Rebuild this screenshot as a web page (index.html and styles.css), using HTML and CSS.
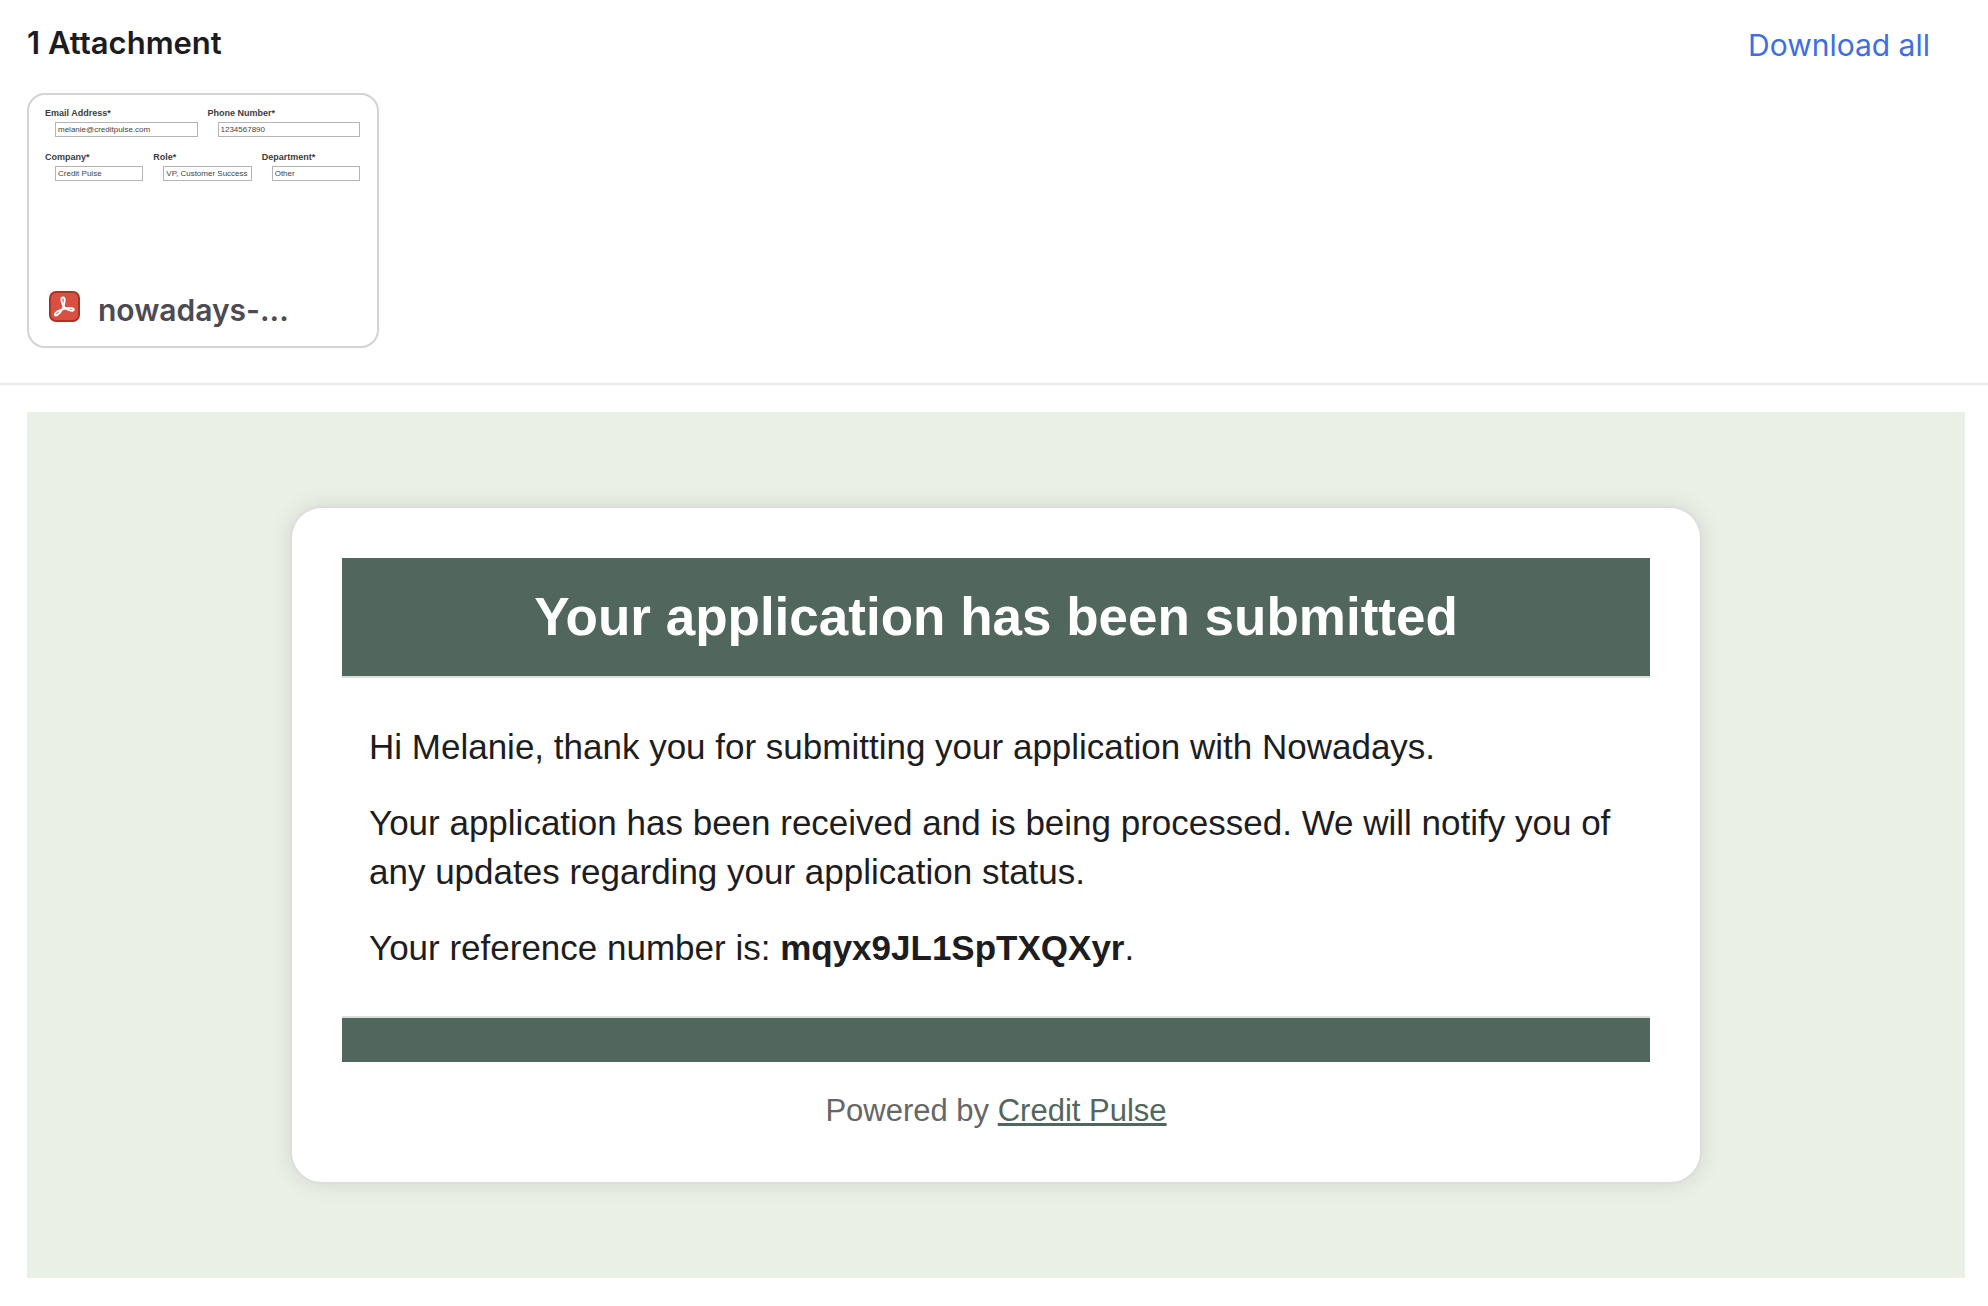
FILE: index.html
```html
<!DOCTYPE html>
<html lang="en">
<head>
<meta charset="utf-8">
<title>Your application has been submitted</title>
<link rel="stylesheet" href="styles.css">
</head>
<body>
<section class="attachments">
  <header class="attachments-header">
    <h2 class="attachments-title">1 Attachment</h2>
    <a class="download-all" href="#download">Download all</a>
  </header>
  <article class="file-card">
    <div class="preview">
      <div class="preview-row">
        <div class="field"><label for="email">Email Address*</label><input id="email" type="text" value="melanie@creditpulse.com" readonly></div>
        <div class="field"><label for="phone">Phone Number*</label><input id="phone" type="text" value="1234567890" readonly></div>
      </div>
      <div class="preview-row">
        <div class="field"><label for="company">Company*</label><input id="company" type="text" value="Credit Pulse" readonly></div>
        <div class="field"><label for="role">Role*</label><input id="role" type="text" value="VP, Customer Success" readonly></div>
        <div class="field"><label for="department">Department*</label><input id="department" type="text" value="Other" readonly></div>
      </div>
    </div>
    <button class="file-name" type="button">
      <svg class="pdf-icon" viewBox="0 0 31 31" aria-hidden="true">
        <rect x="1" y="1" width="29" height="29" rx="6" fill="#d95043" stroke="#ad3226" stroke-width="2"/>
        <path d="M14.5 15.5C12 10 11.500 6.500 14 6.500S15.800 10.500 14.500 15.500C13 20 9 24.500 6.800 24.500S6 20.500 12 18.800C18 16.500 24.500 16.500 24.800 18.500S19.500 20.500 14.500 15.500" fill="none" stroke="#fff" stroke-width="1.900" stroke-linejoin="round"/>
      </svg>
      <span>nowadays-...</span>
    </button>
  </article>
</section>
<main class="message">
  <div class="mail-card">
    <h1 class="mail-title">Your application has been submitted</h1>
    <div class="mail-body">
      <p>Hi Melanie, thank you for submitting your application with Nowadays.</p>
      <p>Your application has been received and is being processed. We will notify you of any updates regarding your application status.</p>
      <p>Your reference number is: <strong>mqyx9JL1SpTXQXyr</strong>.</p>
    </div>
    <div class="mail-bar"></div>
    <p class="mail-footer">Powered by <a href="#credit-pulse">Credit Pulse</a></p>
  </div>
</main>
</body>
</html>
```
FILE: styles.css
```css
* {
  box-sizing: border-box;
}

body {
  margin: 0;
  background: #fff;
  font-family: "Liberation Sans", Arial, sans-serif;
}

.attachments {
  padding: 23px 27px 35px;
  border-bottom: 2px solid #e9e9e9;
}

.attachments-header {
  display: flex;
  justify-content: space-between;
  align-items: flex-start;
  padding-right: 31px;
  margin-bottom: 26px;
  font-family: Inter, sans-serif;
}

.attachments-title {
  margin: 0;
  font-size: 31px;
  line-height: 40px;
  font-weight: 600;
  color: #1c1b20;
}

.download-all {
  font-size: 30px;
  line-height: 44px;
  color: #3d6ee2;
  text-decoration: none;
}

.file-card {
  display: flex;
  flex-direction: column;
  justify-content: space-between;
  width: 352px;
  min-height: 255px;
  padding: 12px 17px 16px 16px;
  border: 2px solid #d3d3d3;
  border-radius: 18px;
}

.preview {
  display: grid;
  gap: 14px;
}

.preview-row {
  display: grid;
  grid-auto-flow: column;
  grid-auto-columns: minmax(0, 1fr);
  gap: 10px;
}

.field {
  display: grid;
  gap: 3px;
}

.field label {
  font-size: 9px;
  line-height: 12px;
  font-weight: 700;
  color: #3c3c3c;
}

.field input {
  min-width: 0;
  height: 15px;
  margin-left: 10px;
  padding: 0 0 0 2px;
  border: 1px solid #b4b4b4;
  background: #fff;
  font: 8px/12px "Liberation Sans", Arial, sans-serif;
  color: #444;
}

.file-name {
  display: flex;
  align-items: center;
  gap: 18px;
  padding: 0 4px;
  border: 0;
  background: none;
  font: 600 30px/40px Inter, sans-serif;
  color: #4c4b54;
}

.pdf-icon {
  width: 31px;
  height: 31px;
  margin-bottom: 8px;
}

.message {
  margin: 27px 23px 28px 27px;
  padding: 94px 24px;
  background: #eaf0e5;
}

.mail-card {
  max-width: 1412px;
  margin: 0 auto;
  padding: 50px;
  border: 2px solid #ddd;
  border-radius: 32px;
  background: #fff;
  box-shadow: 0 0 22px rgba(0, 0, 0, 0.1);
}

.mail-title {
  margin: 0;
  padding: 22px;
  border-bottom: 2px solid #ddd;
  background: #51665c;
  color: #fff;
  font-size: 53px;
  line-height: 74px;
  text-align: center;
}

.mail-body {
  padding: 44px 27px;
  color: #1d1d1f;
  font-size: 35px;
  line-height: 49px;
}

.mail-body p {
  margin: 0 0 27px;
}

.mail-body p:last-child {
  margin-bottom: 0;
}

.mail-bar {
  height: 46px;
  border-top: 2px solid #ddd;
  background: #51665c;
}

.mail-footer {
  margin: 27px 0 0;
  color: #666;
  font-size: 31px;
  line-height: 43px;
  text-align: center;
}

.mail-footer a {
  color: #51665c;
  text-decoration-thickness: 3px;
}
```
